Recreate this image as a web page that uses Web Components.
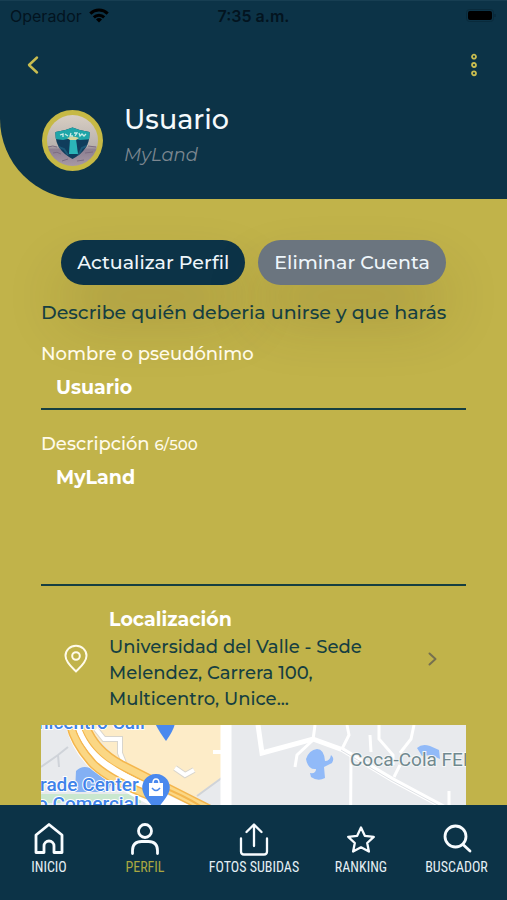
<!DOCTYPE html>
<html lang="es">
<head>
<meta charset="utf-8">
<meta name="viewport" content="width=device-width, initial-scale=1">
<title>Perfil</title>
<style>
  :root {
    --navy: #0c3347;
    --gold: #c1b34a;
    --ink: #163f41;
    --cream: #fffbea;
  }
  html, body { margin: 0; height: 100%; }
  body { background: var(--gold); font-family: Montserrat, Inter, "Open Sans", sans-serif; color: var(--ink); }
</style>
</head>
<body>
<app-shell>
  <profile-header slot="top" name="Usuario" place="MyLand"></profile-header>
  <action-row>
    <pill-button>Actualizar Perfil</pill-button>
    <pill-button tone="muted">Eliminar Cuenta</pill-button>
  </action-row>
  <profile-form></profile-form>
  <location-row>
    <span slot="title">Localización</span>
    Universidad del Valle - Sede Melendez, Carrera 100, Multicentro, Unice...
  </location-row>
  <map-view></map-view>
  <tab-bar slot="bottom">
    <tab-item icon="home">INICIO</tab-item>
    <tab-item icon="user" active>PERFIL</tab-item>
    <tab-item icon="upload">FOTOS SUBIDAS</tab-item>
    <tab-item icon="star">RANKING</tab-item>
    <tab-item icon="search">BUSCADOR</tab-item>
  </tab-bar>
</app-shell>
<script>
const define = (name, render) => customElements.define(name, class extends HTMLElement {
  constructor() {
    super();
    this.attachShadow({ mode: 'open' });
  }
  connectedCallback() {
    this.shadowRoot.innerHTML = '<style>*, :host{box-sizing:border-box}</style>' + render(this);
  }
});

define('app-shell', () => `
  <style>
    :host { display: flex; flex-direction: column; height: 100vh; background: var(--gold); }
    main { flex: 1; min-height: 0; overflow-y: auto; scrollbar-width: none; padding: 41px 41px 0; }
  </style>
  <slot name="top"></slot>
  <main><slot></slot></main>
  <slot name="bottom"></slot>`);

define('status-bar', () => `
  <style>
    :host { display: grid; grid-template-columns: 1fr auto 1fr; align-items: center; height: 29px; padding: 0 10px; color: #03141f; font-family: Inter, "Liberation Sans", sans-serif; font-size: 16px; }
    .left { display: flex; align-items: center; gap: 7px; }
    .time { font-weight: 600; }
    .battery { justify-self: end; display: block; }
    svg { display: block; }
  </style>
  <div class="left"><span>Operador</span>
    <svg width="20" height="15" viewBox="0 0 20 15" fill="none" stroke="#000" stroke-width="3">
      <path d="M1.300 5.600a12.500 12.500 0 0 1 17.400 0"/><path d="M4.800 9.300a7.500 7.500 0 0 1 10.400 0"/>
      <path d="M10 14.500l-3-3a4.300 4.300 0 0 1 6 0z" fill="#000" stroke="none"/>
    </svg>
  </div>
  <span class="time">7:35 a.m.</span>
  <svg class="battery" width="31" height="14" viewBox="0 0 31 14">
    <rect x="0.500" y="0.500" width="27" height="12" rx="3" fill="none" stroke="#092a3b"/>
    <rect x="2" y="2" width="24" height="9" rx="2" fill="#000"/>
    <path d="M29 5v3" stroke="#092a3b" stroke-width="1.500"/>
  </svg>`);

define('profile-header', el => `
  <style>
    :host { display: block; flex: none; background: var(--navy); color: #f5fafc; border-bottom-left-radius: 80px; padding-bottom: 28px; border-top: 1px solid #173e52; }
    nav { display: flex; justify-content: space-between; align-items: center; height: 70px; padding: 0 20px; }
    button { display: grid; place-items: center; width: 26px; height: 32px; padding: 0; border: 0; background: none; color: #c9bd50; cursor: pointer; }
    .who { display: flex; align-items: center; gap: 21px; padding: 0 42px; }
    .avatar { flex: none; width: 61px; height: 61px; margin-top: 10px; }
    h1 { margin: 0; font-size: 27px; line-height: 38px; font-weight: 500; }
    p { margin: 0; font-size: 18px; line-height: 32px; font-style: italic; color: #7c8790; }
  </style>
  <status-bar></status-bar>
  <nav>
    <button aria-label="Volver"><svg width="12" height="20" viewBox="0 0 12 20" fill="none" stroke="currentColor" stroke-width="2.400" stroke-linecap="round" stroke-linejoin="round"><path d="M10 2.500L2 10l8 7.500"/></svg></button>
    <button aria-label="Más opciones"><svg width="8" height="24" viewBox="0 0 8 24" fill="none" stroke="currentColor" stroke-width="1.800"><circle cx="4" cy="3.700" r="2"/><circle cx="4" cy="12" r="2"/><circle cx="4" cy="20.300" r="2"/></svg></button>
  </nav>
  <div class="who">
    <svg class="avatar" viewBox="0 0 61 61" role="img" aria-label="Foto de perfil">
      <defs>
        <linearGradient id="sky" x2="0" y2="1"><stop offset="0" stop-color="#d8cec3"/><stop offset=".6" stop-color="#b9b2ae"/><stop offset=".68" stop-color="#8d7f91"/><stop offset="1" stop-color="#a899a5"/></linearGradient>
        <clipPath id="shield"><path d="M30.500 17.500q8 3.500 17 4.500 1 18-17 27-18-9-17-27 9-1 17-4.500z"/></clipPath>
      </defs>
      <circle cx="30.500" cy="30.500" r="30.500" fill="#c6b945"/>
      <circle cx="30.500" cy="30.500" r="25.500" fill="url(#sky)"/>
      <path d="M6 37q5-2 9 0M46 36l8 1M11 43q4-2 8 1M43 43l8-1M20 51l6-2M35 51l7-1" stroke="#7d6d82" fill="none"/>
      <g clip-path="url(#shield)">
        <rect x="12" y="16" width="38" height="34" fill="#103d5c"/>
        <path d="M12 16h38v13l-12 1-8-2-9 2-9-1z" fill="#1fa6a9"/>
        <path d="M28 29h6l2 15h-9z" fill="#2bb5b8"/>
        <path d="M25 28q6-3 12 0l-3 2h-6z" fill="#d5d69c"/>
        <path d="M18 25l3-1v3m2-3l3 2m3-3l-1 3 3 0m1-3h3l-2 3m4-3l1 3 2-2 2 2 2-2" fill="none" stroke="#c9ebe5" stroke-width="1.300"/>
        <path d="M14 36l8 3 4 6m23-11l-9 4-4 8" stroke="#1c5877" fill="none" stroke-width="2"/>
      </g>
    </svg>
    <div><h1>${el.getAttribute('name')}</h1><p>${el.getAttribute('place')}</p></div>
  </div>`);

define('action-row', () => `
  <style>
    :host { display: flex; justify-content: center; gap: 13px; }
  </style><slot></slot>`);

define('pill-button', el => `
  <style>
    :host { display: block; }
    button { height: 45px; padding: 0 16px; border: 0; border-radius: 23px; font: inherit; font-size: 19px; font-weight: 500; white-space: nowrap; cursor: pointer;
      color: #eef6fb; background: ${el.getAttribute('tone') === 'muted' ? '#6b757f' : 'var(--navy)'}; box-shadow: 0 34px 60px rgba(70, 50, 20, .18); }
  </style><button type="button"><slot></slot></button>`);

define('profile-form', () => `
  <style>
    :host { display: block; position: relative; }
    p { margin: 14px 0 0; font-size: 19px; line-height: 28px; font-weight: 500; }
    label { display: block; margin-top: 14px; font-size: 18px; line-height: 26px; font-weight: 500; color: var(--cream); }
    small { font-size: 15px; }
    input, textarea { display: block; width: 100%; margin: 0; padding: 6px 15px; border: 0; border-bottom: 2px solid var(--ink); border-radius: 0; outline: 0; background: none; color: #fff; font: inherit; font-size: 19px; line-height: 28px; font-weight: 700; resize: none; }
    input { height: 43px; }
    textarea { height: 128px; }
    .second { margin-top: 21px; }
  </style>
  <form>
    <p>Describe quién deberia unirse y que harás</p>
    <label for="name">Nombre o pseudónimo</label>
    <input id="name" value="Usuario">
    <label class="second" for="about">Descripción <small>6/500</small></label>
    <textarea id="about">MyLand</textarea>
  </form>`);

define('location-row', () => `
  <style>
    :host { display: block; }
    button { display: grid; grid-template-columns: 68px 1fr auto; align-items: center; width: 100%; padding: 20px 29px 13px 0; border: 0; background: none; color: inherit; font: inherit; font-size: 18px; line-height: 26px; font-weight: 500; text-align: left; cursor: pointer; }
    .pin { margin-left: 22px; color: var(--cream); }
    .title { display: block; font-size: 19px; line-height: 28px; font-weight: 700; color: #fff; }
    .text { padding-right: 60px; }
  </style>
  <button type="button">
    <svg class="pin" width="26" height="30" viewBox="0 0 26 30" fill="none" stroke="currentColor" stroke-width="2"><path d="M13 27.500C9 23.500 2.500 18 2.500 11.700a10.500 10 0 0 1 21 0C23.500 18 17 23.500 13 27.500z" stroke-linejoin="round"/><circle cx="13" cy="12" r="3.800"/></svg>
    <span class="text"><span class="title"><slot name="title"></slot></span><slot></slot></span>
    <svg width="9" height="14" viewBox="0 0 9 14" fill="none" stroke="#76704f" stroke-width="2" stroke-linecap="round" stroke-linejoin="round"><path d="M1.500 1.500L7.500 7l-6 5.500"/></svg>
  </button>`);

define('map-view', () => `
  <style>
    :host { display: block; }
    svg { display: block; width: 100%; height: 180px; background: #e8eaed; }
    text { font-family: Roboto, sans-serif; font-size: 19px; font-weight: 500; }
    .poi { fill: #3f83ea; stroke: #fff; stroke-width: 2px; paint-order: stroke; }
    .area { fill: #71898f; font-weight: 400; stroke: #f4f6f7; stroke-width: 2px; paint-order: stroke; }
  </style>
  <svg role="img" aria-label="Mapa">
    <path d="M44 0h136v54l-24 18-70-28z" fill="#fdecc8"/>
    <path d="M35 46q8-8 19 0l17 11-4 10H34z" fill="#83b0f4"/>
    <path d="M0 69h100v9H0z" fill="#c9e7cf"/>
    <path d="M0 42l17-12 10-8M17 30l1 12M156 71l26-19" fill="none" stroke="#cfd3d9" stroke-width="2"/>
    <path d="M55 4l8 10 16 0v14l4 10M134 43l10 7 9-5" fill="none" stroke="#d8d5cd" stroke-width="6"/>
    <path d="M55 4l8 10 16 0v14l4 10M134 43l10 7 9-5" fill="none" stroke="#fff" stroke-width="4"/>
    <path d="M33-2Q38 22 56 38q30 24 90 50" fill="none" stroke="#fff" stroke-width="17"/>
    <path d="M29-2Q33 18 52 39q18 17 60 33" fill="none" stroke="#f4b64d" stroke-width="9"/>
    <path d="M29-2Q33 18 52 39q18 17 60 33" fill="none" stroke="#fbd784" stroke-width="6"/>
    <path d="M43-2Q52 25 80 40q42 21 93 47" fill="none" stroke="#f4b64d" stroke-width="10"/>
    <path d="M43-2Q52 25 80 40q42 21 93 47" fill="none" stroke="#fbd784" stroke-width="7"/>
    <path d="M36-2Q42 22 64 38q20 14 40 22" fill="none" stroke="#fff" stroke-width="5"/>
    <path d="M121 62q26 10 46 24" fill="none" stroke="#f4b64d" stroke-width="2"/>
    <path d="M185-1v182" fill="none" stroke="#fff" stroke-width="11"/>
    <path d="M172 27h10" fill="none" stroke="#fff" stroke-width="4"/>
    <g fill="none" stroke="#fff">
      <path d="M217 0l4 28 51-14 30 11 50 30 71 38" stroke-width="5"/>
      <path d="M274 0l-2 15-16 15-2 12M306 0l2 10-7 14M338 0v14l14 16v10M329 10l1 17M373 0l-3 14-11 14M359 40l-6 12M310 30l-1 150M408 66v20" stroke-width="3"/>
    </g>
    <path d="M300 25l50 30 71 38" fill="none" stroke="#dfe2e6" stroke-width="1"/>
    <path d="M265 34q3-9 11-10 7 0 8 12 5 0 6-6 4 3 1 8l-8 4 1 11q-7 4-14-1l-1-4q6 1 6-4-8 1-10-10z" fill="#91baf8"/>
    <path d="M376 23q5-5 13-2l9 4 1 9-9-4-9 1z" fill="#91baf8"/>
    <path d="M114-2h20q-1 7-9 18-8-11-11-18z" fill="#4a89ee"/>
    <text class="poi" x="-3" y="4">nicentro Cali</text>
    <text class="poi" x="-1" y="66">rade Center</text>
    <text class="poi" x="-4" y="85">o Comercial</text>
    <path d="M115 49a13.500 13.500 0 0 1 13 18q-3 7-13 18-11-11-13-18a13.500 13.500 0 0 1 13-18z" fill="#4a89ee"/>
    <path d="M108 58h14v13h-14z" fill="#fff"/><path d="M112 58q0-4 3-4t3 4" fill="none" stroke="#fff" stroke-width="1.500"/><path d="M111 63q4 5 8 0" fill="none" stroke="#4a89ee" stroke-width="1.500"/>
    <text class="area" x="309" y="41">Coca-Cola FEM</text>
  </svg>`);

define('tab-bar', () => `
  <style>
    :host { display: grid; flex: none; grid-template-columns: 98fr 94fr 124fr 90fr 101fr; padding: 16px 0 23px; background: var(--navy); color: #e4eff5; }
  </style><slot></slot>`);

const icons = {
  home: '<path d="M5 31.500V14L18 3.500 31 14v17.500h-8V25a5 5 0 0 0-10 0v6.500z"/>',
  user: '<circle cx="18" cy="10" r="6.500"/><path d="M5.500 32.500v-3q0-9 9-9h7q9 0 9 9v3" stroke-linecap="round"/>',
  upload: '<path d="M18 25V4M10.500 11L18 3.500 25.500 11M5 17.500v13q0 3 3 3h20q3 0 3-3v-13" stroke-width="2.300" stroke-linecap="round"/>',
  star: '<path d="M18 6.500l3.800 8.300 9 1-6.600 6.200 1.700 8.500L18 26.300 10.100 30.500l1.700-8.500-6.600-6.200 9-1z" stroke-width="2.300"/>',
  search: '<circle cx="16.500" cy="15.500" r="10.500"/><path d="M24 23.500l7 6.500" stroke-linecap="round"/>'
};

define('tab-item', el => `
  <style>
    :host { display: block; text-align: center; }
    a { display: flex; flex-direction: column; align-items: center; color: ${el.hasAttribute('active') ? '#a9a741' : 'inherit'}; text-decoration: none; font-family: "Roboto Condensed", "Liberation Sans Narrow", Roboto, sans-serif; font-size: 14px; line-height: 20px; white-space: nowrap; }
    svg { display: block; color: #f8fcff; }
  </style>
  <a href="#"><svg width="36" height="36" viewBox="0 0 36 36" fill="none" stroke="currentColor" stroke-width="2.800" stroke-linejoin="round">${icons[el.getAttribute('icon')]}</svg><slot></slot></a>`);
</script>
</body>
</html>
